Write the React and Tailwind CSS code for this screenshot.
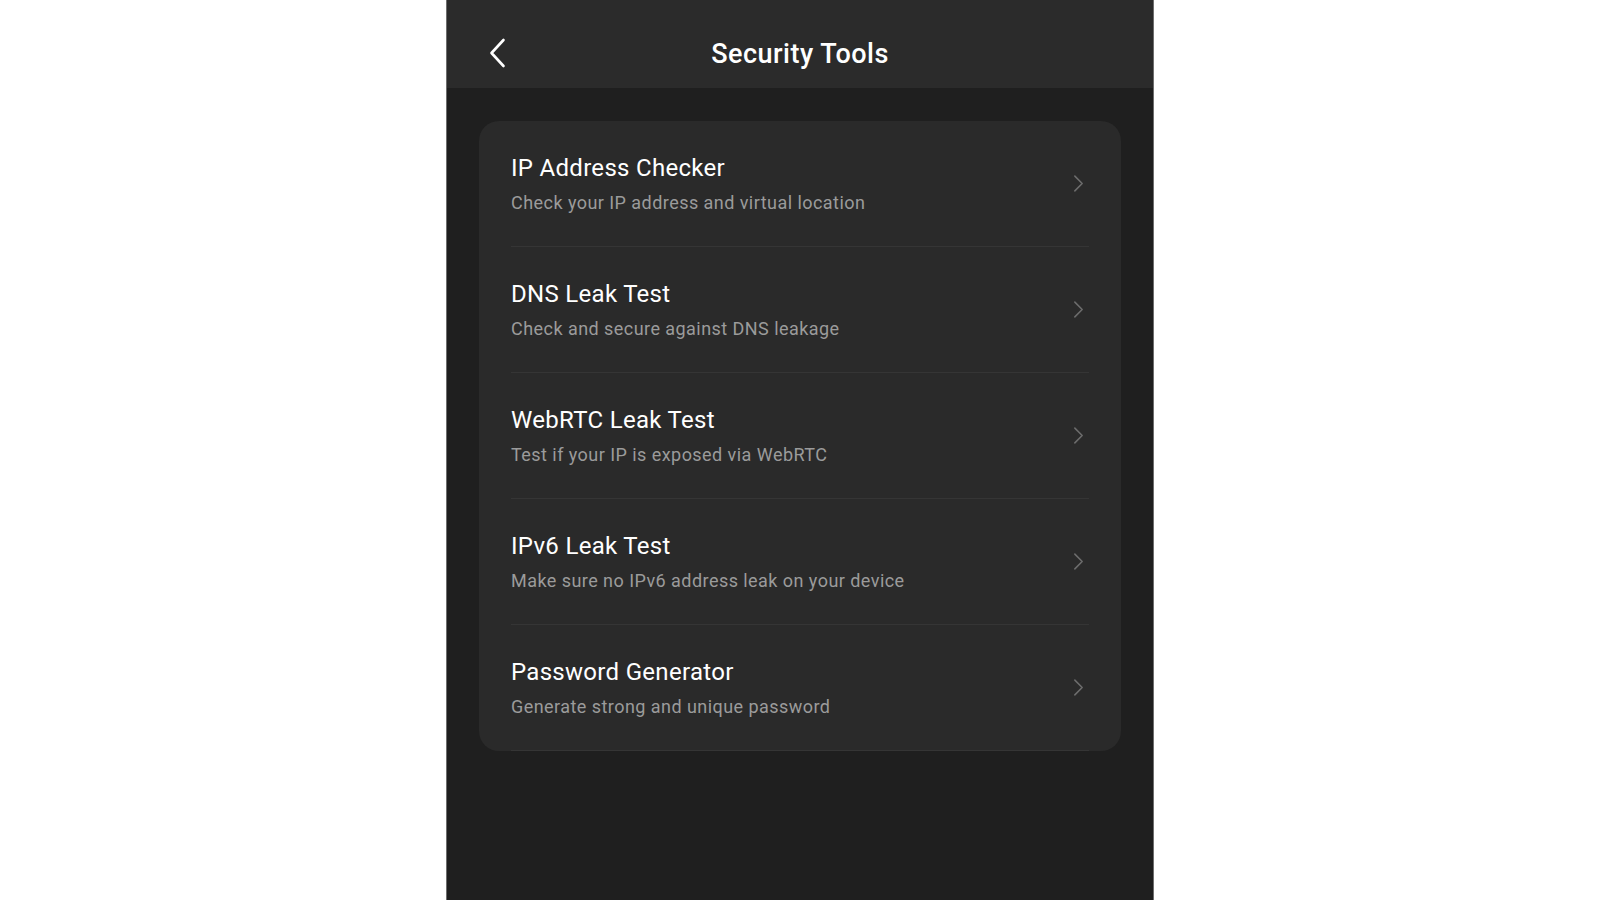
const tools = [
  { title: 'IP Address Checker', desc: 'Check your IP address and virtual location' },
  { title: 'DNS Leak Test', desc: 'Check and secure against DNS leakage' },
  { title: 'WebRTC Leak Test', desc: 'Test if your IP is exposed via WebRTC' },
  { title: 'IPv6 Leak Test', desc: 'Make sure no IPv6 address leak on your device' },
  { title: 'Password Generator', desc: 'Generate strong and unique password' },
]

function Chevron({ className, strokeWidth = 2 }) {
  return (
    <svg viewBox="0 0 12 20" fill="none" className={className}>
      <path d="M2 2l8 8-8 8" stroke="currentColor" strokeWidth={strokeWidth} strokeLinecap="round" strokeLinejoin="round" />
    </svg>
  )
}

export default function App() {
  return (
    <div className="min-h-screen bg-white flex justify-center" style={{ fontFamily: 'Roboto, "Liberation Sans", sans-serif' }}>
      <div className="w-[708px] h-[900px] bg-[#1f1f1f] border-x border-[#6e6e6e] flex flex-col">
        <header className="h-[88px] bg-[#2b2b2b] relative flex items-center justify-center">
          <button className="absolute left-[42px] top-[38px] text-white">
            <svg viewBox="0 0 16 30" fill="none" className="w-[17px] h-[30px]">
              <path d="M14 2L2 15l12 13" stroke="currentColor" strokeWidth="2.6" strokeLinecap="round" strokeLinejoin="round" />
            </svg>
          </button>
          <h1 className="text-white text-[27px] font-medium tracking-[0.5px] mt-[20px]">Security Tools</h1>
        </header>

        <div className="px-[32px] pt-[33px]">
          <div className="bg-[#2a2a2a] rounded-[20px] overflow-hidden">
            {tools.map(t => (
              <div key={t.title} className="mx-[32px] h-[126px] border-b border-[#353535] flex items-center">
                <div className="flex-1 flex flex-col gap-[8px]">
                  <div className="text-white text-[24px] leading-[30px] tracking-[0.3px]">{t.title}</div>
                  <div className="text-[#9b9b9b] text-[18px] leading-[24px] tracking-[0.45px]">{t.desc}</div>
                </div>
                <Chevron className="w-[11px] h-[19px] text-[#6c6c6c] mr-[5px]" strokeWidth={1.7} />
              </div>
            ))}
          </div>
        </div>
      </div>
    </div>
  )
}
